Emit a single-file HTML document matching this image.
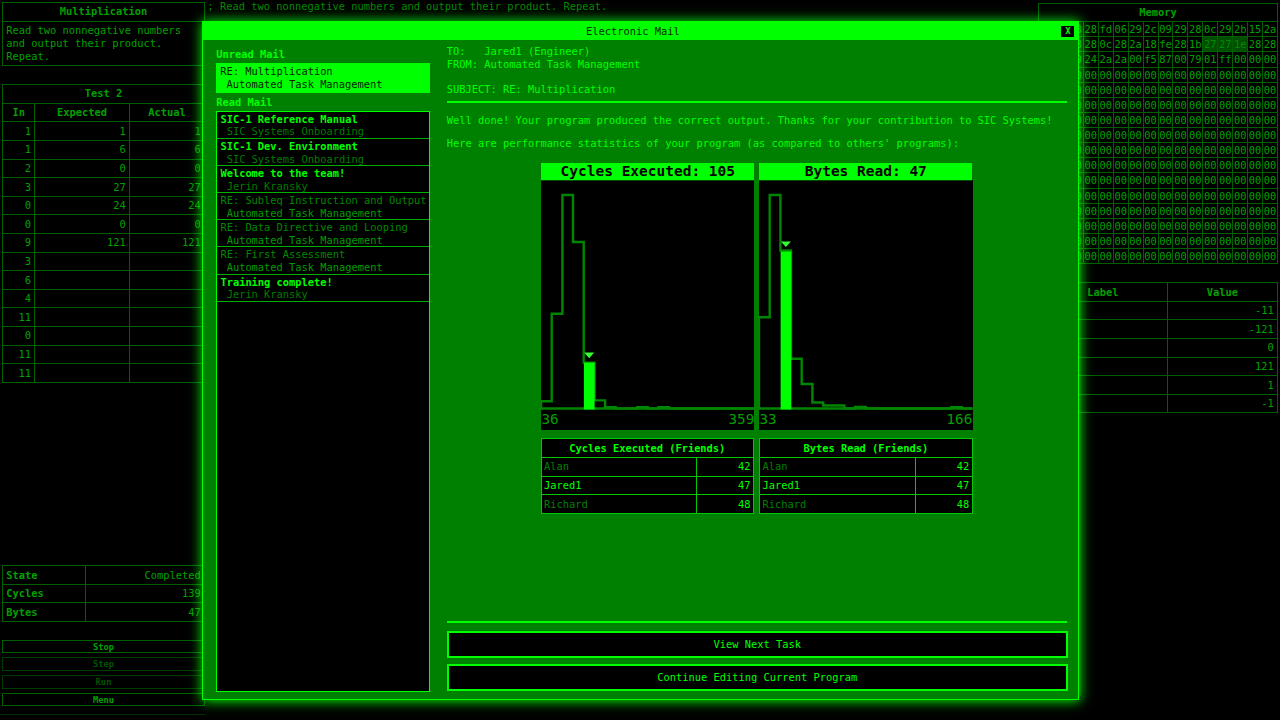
<!DOCTYPE html>
<html lang="en"><head><meta charset="utf-8"><title>SIC-1 - Electronic Mail</title>
<style>
*{box-sizing:border-box}
html,body{margin:0;padding:0;background:#000;width:1280px;height:720px;overflow:hidden}
body{position:relative;font:10.38px/12.8px "DejaVu Sans Mono","Liberation Mono",monospace;color:#00a000;-webkit-font-smoothing:antialiased}
table{border-collapse:collapse;border-spacing:0;table-layout:fixed;font:inherit}
.bg{position:absolute;left:0;top:0;width:1280px;height:720px;color:var(--t);--t:#00a000;--b:#006000}
.bg table{position:absolute}
.bg td,.bg th{border:1px solid var(--b);padding:2.4px 3.2px;height:18.6px;font-weight:normal;text-align:right;overflow:hidden;white-space:nowrap}
.bg th{font-weight:bold;text-align:center}
.bg td.l{text-align:left;white-space:normal}
.bg th.l{text-align:left}
.code{position:absolute;left:207.5px;top:0.4px;white-space:pre;color:#008a00}
#mem td{height:15.13px;padding:0.67px 0 0 0;text-align:center;line-height:12.8px}
#mem td.hl{background:#004e00;color:#008c00}
.btn{position:absolute;left:2px;width:203px;height:13.2px;border:1px solid var(--b);font-size:8.8px;line-height:12px;text-align:center;font-weight:bold;color:var(--t)}
.btn.dis{color:#005400;border-color:#003c00}
.foot{position:absolute;left:0;top:714px;width:205px;height:1px;background:#003000}

.dlg{position:absolute;left:202px;top:21px;width:876.5px;height:678.5px;background:#008000;border:1px solid #00ff00;box-shadow:0 0 12px 0.5px #00ff00;color:#00ff00}
.hdr{position:absolute;left:0;top:0;right:0;height:18.4px;background:#00ff00;color:#000;text-align:center;line-height:18px}
.hdr span{position:absolute;left:383px;top:-0.4px;white-space:pre;color:#002c00}
.x{position:absolute;left:858.4px;top:3.6px;width:13px;height:11.4px;background:#000;color:#00ff00;font-size:8.8px;line-height:11.4px;text-align:center;font-weight:bold}
.abs{position:absolute;white-space:pre}
b,.b{font-weight:bold}
.unread{position:absolute;left:13px;top:41.3px;width:214.2px;height:29.3px;background:#00ff00;color:#002400;padding:1.8px 0 0 4.2px;white-space:pre}
.list{position:absolute;left:13.4px;top:88.7px;width:213.4px;height:581px;background:#000;border:1px solid #00ff00}
.it{height:27.15px;border-bottom:1px solid #00b000;padding:1px 0 0 3px;white-space:pre;color:#00a000}
.it.n b{color:#00ff00}
.it .s{color:#007c00}
.it.r .t{color:#008800}
.it.r .s{color:#009c00}
hr{position:absolute;margin:0;border:0;height:2px;background:#00ff00;left:244.3px;width:620px}
.btn2{position:absolute;left:244px;width:620.6px;height:28.2px;border:2px solid #00ff00;background:#000;text-align:center;line-height:23.4px;color:#00ff00}
.chart{position:absolute;top:141px;width:213.5px;height:267.2px;background:#000}
.ft{position:absolute;top:416.4px;background:#000;color:#00ff00}
.ft td,.ft th{border:1px solid #00c800;height:18.55px;padding:2.4px 2.4px;white-space:nowrap;overflow:hidden}
.ft th{font-weight:bold;text-align:center}
.ft td.v{text-align:right}
.ft tr.o td:first-child{color:#008000}
</style></head>
<body>
<div class="bg">
<table style="left:2px;top:2px;width:203px"><tr><th>Multiplication</th></tr><tr><td class="l" style="height:44.2px">Read two nonnegative numbers and output their product. Repeat.</td></tr></table>
<table style="left:2px;top:84.3px;width:203px"><colgroup><col style="width:32.3px"><col style="width:94.6px"><col></colgroup><tr><th colspan="3" style="padding-top:1.9px">Test 2</th></tr><tr><th>In</th><th>Expected</th><th>Actual</th></tr><tr><td>1</td><td>1</td><td>1</td></tr><tr><td>1</td><td>6</td><td>6</td></tr><tr><td>2</td><td>0</td><td>0</td></tr><tr><td>3</td><td>27</td><td>27</td></tr><tr><td>0</td><td>24</td><td>24</td></tr><tr><td>0</td><td>0</td><td>0</td></tr><tr><td>9</td><td>121</td><td>121</td></tr><tr><td>3</td><td></td><td></td></tr><tr><td>6</td><td></td><td></td></tr><tr><td>4</td><td></td><td></td></tr><tr><td>11</td><td></td><td></td></tr><tr><td>0</td><td></td><td></td></tr><tr><td>11</td><td></td><td></td></tr><tr><td>11</td><td></td><td></td></tr></table>
<table style="left:2px;top:565.3px;width:203px"><colgroup><col style="width:83.3px"><col></colgroup><tr><th class="l">State</th><td>Completed</td></tr><tr><th class="l">Cycles</th><td>139</td></tr><tr><th class="l">Bytes</th><td>47</td></tr></table>
<div class="btn" style="top:639.60px">Stop</div><div class="btn dis" style="top:657.47px">Step</div><div class="btn dis" style="top:675.34px">Run</div><div class="btn" style="top:693.21px">Menu</div>
<div class="foot"></div>
<div class="code">; Read two nonnegative numbers and output their product. Repeat.</div>
<table id="mem" style="left:1038px;top:2.6px;width:240px"><tr><th colspan="16" style="height:18.6px">Memory</th></tr><tr><td>12</td><td>01</td><td>28</td><td>28</td><td>fd</td><td>06</td><td>29</td><td>2c</td><td>09</td><td>29</td><td>28</td><td>0c</td><td>29</td><td>2b</td><td>15</td><td>2a</td></tr><tr><td>2a</td><td>2b</td><td>28</td><td>28</td><td>0c</td><td>28</td><td>2a</td><td>18</td><td>fe</td><td>28</td><td>1b</td><td class="hl">27</td><td class="hl">27</td><td class="hl">1e</td><td>28</td><td>28</td></tr><tr><td>28</td><td>27</td><td>29</td><td>24</td><td>2a</td><td>2a</td><td>00</td><td>f5</td><td>87</td><td>00</td><td>79</td><td>01</td><td>ff</td><td>00</td><td>00</td><td>00</td></tr><tr><td>00</td><td>00</td><td>00</td><td>00</td><td>00</td><td>00</td><td>00</td><td>00</td><td>00</td><td>00</td><td>00</td><td>00</td><td>00</td><td>00</td><td>00</td><td>00</td></tr><tr><td>00</td><td>00</td><td>00</td><td>00</td><td>00</td><td>00</td><td>00</td><td>00</td><td>00</td><td>00</td><td>00</td><td>00</td><td>00</td><td>00</td><td>00</td><td>00</td></tr><tr><td>00</td><td>00</td><td>00</td><td>00</td><td>00</td><td>00</td><td>00</td><td>00</td><td>00</td><td>00</td><td>00</td><td>00</td><td>00</td><td>00</td><td>00</td><td>00</td></tr><tr><td>00</td><td>00</td><td>00</td><td>00</td><td>00</td><td>00</td><td>00</td><td>00</td><td>00</td><td>00</td><td>00</td><td>00</td><td>00</td><td>00</td><td>00</td><td>00</td></tr><tr><td>00</td><td>00</td><td>00</td><td>00</td><td>00</td><td>00</td><td>00</td><td>00</td><td>00</td><td>00</td><td>00</td><td>00</td><td>00</td><td>00</td><td>00</td><td>00</td></tr><tr><td>00</td><td>00</td><td>00</td><td>00</td><td>00</td><td>00</td><td>00</td><td>00</td><td>00</td><td>00</td><td>00</td><td>00</td><td>00</td><td>00</td><td>00</td><td>00</td></tr><tr><td>00</td><td>00</td><td>00</td><td>00</td><td>00</td><td>00</td><td>00</td><td>00</td><td>00</td><td>00</td><td>00</td><td>00</td><td>00</td><td>00</td><td>00</td><td>00</td></tr><tr><td>00</td><td>00</td><td>00</td><td>00</td><td>00</td><td>00</td><td>00</td><td>00</td><td>00</td><td>00</td><td>00</td><td>00</td><td>00</td><td>00</td><td>00</td><td>00</td></tr><tr><td>00</td><td>00</td><td>00</td><td>00</td><td>00</td><td>00</td><td>00</td><td>00</td><td>00</td><td>00</td><td>00</td><td>00</td><td>00</td><td>00</td><td>00</td><td>00</td></tr><tr><td>00</td><td>00</td><td>00</td><td>00</td><td>00</td><td>00</td><td>00</td><td>00</td><td>00</td><td>00</td><td>00</td><td>00</td><td>00</td><td>00</td><td>00</td><td>00</td></tr><tr><td>00</td><td>00</td><td>00</td><td>00</td><td>00</td><td>00</td><td>00</td><td>00</td><td>00</td><td>00</td><td>00</td><td>00</td><td>00</td><td>00</td><td>00</td><td>00</td></tr><tr><td>00</td><td>00</td><td>00</td><td>00</td><td>00</td><td>00</td><td>00</td><td>00</td><td>00</td><td>00</td><td>00</td><td>00</td><td>00</td><td>00</td><td>00</td><td>00</td></tr><tr><td>00</td><td>00</td><td>00</td><td>00</td><td>00</td><td>00</td><td>00</td><td>00</td><td>00</td><td>00</td><td>00</td><td>00</td><td>00</td><td>00</td><td>00</td><td>00</td></tr></table>
<table style="left:1038px;top:282.2px;width:240px"><colgroup><col style="width:128.8px"><col></colgroup><tr><th>Label</th><th>Value</th></tr><tr><td class="l">@tmp</td><td>-11</td></tr><tr><td class="l">@tmp2</td><td>-121</td></tr><tr><td class="l">@a</td><td>0</td></tr><tr><td class="l">@res</td><td>121</td></tr><tr><td class="l">@one</td><td>1</td></tr><tr><td class="l">@n_one</td><td>-1</td></tr></table>
</div>
<div class="dlg">
<div class="hdr"><span>Electronic Mail</span><div class="x">X</div></div>
<div class="abs b" style="left:13.2px;top:26.4px">Unread Mail</div>
<div class="unread">RE: Multiplication
 Automated Task Management</div>
<div class="abs b" style="left:13.3px;top:73.5px">Read Mail</div>
<div class="list"><div class="it n"><b>SIC-1 Reference Manual</b>
<span class="s"> SIC Systems Onboarding</span></div><div class="it n"><b>SIC-1 Dev. Environment</b>
<span class="s"> SIC Systems Onboarding</span></div><div class="it n"><b>Welcome to the team!</b>
<span class="s"> Jerin Kransky</span></div><div class="it r"><span class="t">RE: Subleq Instruction and Output</span>
<span class="s"> Automated Task Management</span></div><div class="it r"><span class="t">RE: Data Directive and Looping</span>
<span class="s"> Automated Task Management</span></div><div class="it r"><span class="t">RE: First Assessment</span>
<span class="s"> Automated Task Management</span></div><div class="it n"><b>Training complete!</b>
<span class="s"> Jerin Kransky</span></div></div>
<div class="abs" style="left:243.7px;top:23.2px;line-height:12.7px">TO:   Jared1 (Engineer)
FROM: Automated Task Management

SUBJECT: RE: Multiplication</div>
<hr style="top:78.8px">
<div class="abs" style="left:243.7px;top:92px">Well done! Your program produced the correct output. Thanks for your contribution to SIC Systems!</div>
<div class="abs" style="left:243.7px;top:115.4px">Here are performance statistics of your program (as compared to others' programs):</div>
<svg class="chart" style="left:337.6px" width="213.5" height="267.2" viewBox="0 0 213.5 267.2"><rect x="0" y="0" width="213.5" height="17.3" fill="#00ff00"/><text x="106.8" y="12.5" text-anchor="middle" font-size="14.5" font-weight="bold" fill="#000" font-family='DejaVu Sans Mono,Liberation Mono,monospace'>Cycles Executed: 105</text><polyline points="0.0,245.5 0.0,238.3 10.7,238.3 10.7,150.7 21.4,150.7 21.4,32.0 32.0,32.0 32.0,79.0 42.7,79.0 42.7,199.6 53.4,199.6 53.4,237.4 64.1,237.4 64.1,244.2 74.7,244.2 74.7,245.5 85.4,245.5 85.4,245.5 96.1,245.5 96.1,244.2 106.8,244.2 106.8,245.5 117.4,245.5 117.4,244.2 128.1,244.2 128.1,245.5 138.8,245.5 138.8,245.5 149.5,245.5 149.5,245.5 160.1,245.5 160.1,245.5 170.8,245.5 170.8,245.5 181.5,245.5 181.5,245.5 192.2,245.5 192.2,245.5 202.8,245.5 202.8,245.5 213.5,245.5 213.5,245.5" fill="none" stroke="#008600" stroke-width="2.4"/><line x1="0" y1="245.5" x2="213.5" y2="245.5" stroke="#008600" stroke-width="2.4"/><rect x="42.9" y="199.6" width="10.7" height="46.9" fill="#00ff00"/><polygon points="43.2,189.6 53.2,189.6 48.2,195.2" fill="#33ff33"/><text x="0.5" y="261.4" font-size="14.2" fill="#00a000" font-family='DejaVu Sans Mono,Liberation Mono,monospace'>36</text><text x="213.2" y="261.4" text-anchor="end" font-size="14.2" fill="#00a000" font-family='DejaVu Sans Mono,Liberation Mono,monospace'>359</text></svg>
<svg class="chart" style="left:556.2px" width="213.5" height="267.2" viewBox="0 0 213.5 267.2"><rect x="0" y="0" width="213.5" height="17.3" fill="#00ff00"/><text x="106.8" y="12.5" text-anchor="middle" font-size="14.5" font-weight="bold" fill="#000" font-family='DejaVu Sans Mono,Liberation Mono,monospace'>Bytes Read: 47</text><polyline points="0.0,245.5 0.0,154.3 10.7,154.3 10.7,32.0 21.4,32.0 21.4,87.5 32.0,87.5 32.0,195.7 42.7,195.7 42.7,221.0 53.4,221.0 53.4,239.5 64.1,239.5 64.1,242.5 74.7,242.5 74.7,242.5 85.4,242.5 85.4,245.5 96.1,245.5 96.1,243.9 106.8,243.9 106.8,245.5 117.4,245.5 117.4,245.5 128.1,245.5 128.1,245.5 138.8,245.5 138.8,245.5 149.5,245.5 149.5,245.5 160.1,245.5 160.1,245.5 170.8,245.5 170.8,245.5 181.5,245.5 181.5,245.5 192.2,245.5 192.2,244.2 202.8,244.2 202.8,245.5 213.5,245.5 213.5,245.5" fill="none" stroke="#008600" stroke-width="2.4"/><line x1="0" y1="245.5" x2="213.5" y2="245.5" stroke="#008600" stroke-width="2.4"/><rect x="21.6" y="88.4" width="10.7" height="158.1" fill="#00ff00"/><polygon points="21.9,78.4 31.9,78.4 26.9,84.0" fill="#33ff33"/><text x="0.5" y="261.4" font-size="14.2" fill="#00a000" font-family='DejaVu Sans Mono,Liberation Mono,monospace'>33</text><text x="213.2" y="261.4" text-anchor="end" font-size="14.2" fill="#00a000" font-family='DejaVu Sans Mono,Liberation Mono,monospace'>166</text></svg>
<table class="ft" style="left:337.6px;width:213.4px"><colgroup><col style="width:155.4px"><col></colgroup><tr><th colspan="2">Cycles Executed (Friends)</th></tr><tr class="o"><td>Alan</td><td class="v">42</td></tr><tr><td>Jared1</td><td class="v">47</td></tr><tr class="o"><td>Richard</td><td class="v">48</td></tr></table>
<table class="ft" style="left:556.2px;width:213.4px"><colgroup><col style="width:155.4px"><col></colgroup><tr><th colspan="2">Bytes Read (Friends)</th></tr><tr class="o"><td>Alan</td><td class="v">42</td></tr><tr><td>Jared1</td><td class="v">47</td></tr><tr class="o"><td>Richard</td><td class="v">48</td></tr></table>
<hr style="top:598.8px">
<div class="btn2" style="top:608.6px;height:27.4px">View Next Task</div>
<div class="btn2" style="top:641.7px;height:27.5px;line-height:22.6px">Continue Editing Current Program</div>
</div>
</body></html>
